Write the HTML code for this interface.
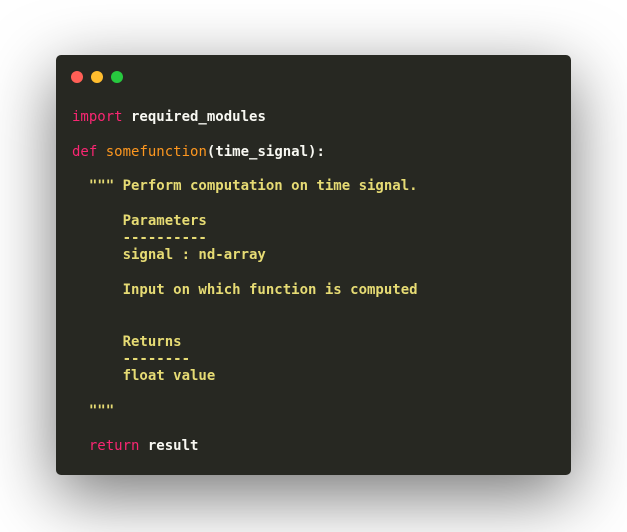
<!DOCTYPE html>
<html><head><meta charset="utf-8"><style>
html,body{margin:0;padding:0;width:627px;height:532px;background:#fff;overflow:hidden}
.win{position:absolute;left:56px;top:55px;width:515px;height:420px;background:#272822;border-radius:5px;box-shadow:0 20px 68px rgba(0,0,0,0.55)}
.dot{position:absolute;top:16px;width:12px;height:12px;border-radius:50%}
pre{position:absolute;left:16px;top:54px;margin:0;font-family:"DejaVu Sans Mono","Liberation Mono",monospace;font-size:14px;font-weight:bold;line-height:17.3px;color:#f8f8f2}
.k{color:#f92672;font-weight:normal}.f{color:#fd971f;font-weight:normal}.s{color:#e6db74}
</style></head><body>
<div class="win">
<div class="dot" style="left:15px;background:#ff5f56"></div>
<div class="dot" style="left:35px;background:#ffbd2e"></div>
<div class="dot" style="left:55px;background:#27c93f"></div>
<pre><span class="k">import</span> required_modules

<span class="k">def</span> <span class="f">somefunction</span>(time_signal):

<span class="s">  """ Perform computation on time signal.

      Parameters
      ----------
      signal : nd-array

      Input on which function is computed


      Returns
      --------
      float value

  """</span>

  <span class="k">return</span> result</pre>
</div>
</body></html>
